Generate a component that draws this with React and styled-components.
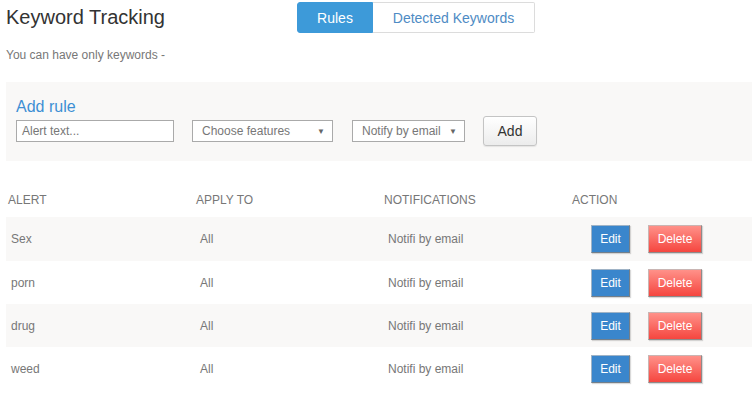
import React from "react";
import styled, { createGlobalStyle } from "styled-components";

const Global = createGlobalStyle`
  html, body { margin: 0; padding: 0; background: #fff; }
  body { font-family: "Liberation Sans", Arial, sans-serif; overflow: hidden; }
  * { box-sizing: border-box; }
`;

const Page = styled.div`
  width: 752px;
  height: 393px;
  padding-left: 6px;
  overflow: hidden;
`;

const TopBar = styled.div`
  display: flex;
  align-items: flex-start;
  height: 33px;
`;

const Title = styled.h1`
  margin: 6px 0 0 0;
  width: 291px;
  font-size: 20px;
  font-weight: normal;
  color: #333;
  line-height: 23px;
`;

const Tabs = styled.div`
  display: flex;
  margin-top: 2px;
`;

const Tab = styled.div`
  height: 31px;
  width: ${(p) => p.$w}px;
  display: flex;
  align-items: center;
  justify-content: center;
  font-size: 14px;
  border: 1px solid ${(p) => (p.$active ? "#3d9ad9" : "#dcdcdc")};
  border-left-width: ${(p) => (p.$active ? 1 : 0)}px;
  background: ${(p) => (p.$active ? "#3d9ad9" : "#fff")};
  color: ${(p) => (p.$active ? "#fff" : "#4e8bc4")};
  border-radius: ${(p) => (p.$active ? "3px 0 0 3px" : "0 2px 2px 0")};
`;

const Sub = styled.p`
  margin: 15px 0 0 0;
  font-size: 12px;
  color: #777;
  line-height: 14px;
`;

const Panel = styled.div`
  margin-top: 20px;
  height: 79px;
  background: #f9f8f7;
  padding: 14px 10px 0 10px;
`;

const PanelTitle = styled.div`
  font-size: 16px;
  color: #3d8fd4;
  line-height: 20px;
  padding-top: 1px;
  height: 24px;
`;

const FormRow = styled.div`
  display: flex;
  align-items: center;
  height: 22px;
`;

const Input = styled.div`
  width: ${(p) => p.$w}px;
  height: 22px;
  margin-right: ${(p) => p.$gap}px;
  border: 1px solid #aaa;
  background: #fff;
  font-size: 12px;
  color: #777;
  display: flex;
  align-items: center;
  justify-content: space-between;
  padding: 0 ${(p) => (p.$select ? 7 : 5)}px 0 ${(p) => (p.$select ? 9 : 5)}px;
`;

const Arrow = styled.span`
  font-size: 8px;
  color: #666;
`;

const AddButton = styled.button`
  width: 54px;
  height: 30px;
  flex: none;
  font-family: inherit;
  font-size: 14px;
  color: #333;
  border: 1px solid #c4c4c4;
  border-radius: 3px;
  background: linear-gradient(#ffffff, #ececec);
  box-shadow: 0 1px 1px rgba(0,0,0,0.08);
  padding: 0;
`;

const Table = styled.div`
  margin-top: 20px;
`;

const Row = styled.div`
  display: grid;
  grid-template-columns: 188px 188px 188px 1fr;
  align-items: center;
  height: ${(p) => p.$h}px;
  padding-top: ${(p) => p.$pt ?? 0}px;
  background: ${(p) => (p.$shade ? "#f9f8f7" : "#fff")};
  width: 760px;
`;

const HeadCell = styled.div`
  font-size: 12px;
  color: #777;
  padding-left: 2px;
  text-transform: uppercase;
`;

const Cell = styled.div`
  font-size: 12px;
  color: #777;
  padding-left: ${(p) => p.$pl ?? 6}px;
`;

const Actions = styled.div`
  display: flex;
  align-items: center;
  padding-left: 21px;
  gap: 18px;
`;

const ActionBtn = styled.button`
  height: 28px;
  width: ${(p) => p.$w}px;
  padding: 0;
  font-family: inherit;
  font-size: 12px;
  color: #fff;
  border: 1px solid;
  border-color: ${(p) => (p.$danger ? "#c9b5b3 #8f8a8a #8f8a8a #c9b5b3" : "#9fb3c6 #737f8a #737f8a #9fb3c6")};
  background: ${(p) => (p.$danger ? "linear-gradient(#ff9189, #f5463f)" : "#3a86cc")};
  box-shadow: 1px 1px 1px rgba(0,0,0,0.15);
`;

const rules = [
  { alert: "Sex", apply: "All", notif: "Notifi by email" },
  { alert: "porn", apply: "All", notif: "Notifi by email" },
  { alert: "drug", apply: "All", notif: "Notifi by email" },
  { alert: "weed", apply: "All", notif: "Notifi by email" },
];

export default function App() {
  return (
    <Page>
      <Global />
      <TopBar>
        <Title>Keyword Tracking</Title>
        <Tabs>
          <Tab $active $w={76}>Rules</Tab>
          <Tab $w={162}>Detected Keywords</Tab>
        </Tabs>
      </TopBar>
      <Sub>You can have only keywords -</Sub>
      <Panel>
        <PanelTitle>Add rule</PanelTitle>
        <FormRow>
          <Input $w={158} $gap={18}>Alert text...</Input>
          <Input $w={141} $gap={19} $select>
            Choose features <Arrow>▼</Arrow>
          </Input>
          <Input $w={113} $gap={18} $select>
            Notify by email <Arrow>▼</Arrow>
          </Input>
          <AddButton>Add</AddButton>
        </FormRow>
      </Panel>
      <Table>
        <Row $h={36} $pt={2}>
          <HeadCell>Alert</HeadCell>
          <HeadCell>Apply to</HeadCell>
          <HeadCell>Notifications</HeadCell>
          <HeadCell>Action</HeadCell>
        </Row>
        {rules.map((r, i) => (
          <Row key={r.alert} $h={i === 0 ? 44 : 43} $shade={i % 2 === 0}>
            <Cell $pl={5}>{r.alert}</Cell>
            <Cell>{r.apply}</Cell>
            <Cell>{r.notif}</Cell>
            <Actions>
              <ActionBtn $w={39}>Edit</ActionBtn>
              <ActionBtn $w={54} $danger>Delete</ActionBtn>
            </Actions>
          </Row>
        ))}
      </Table>
    </Page>
  );
}
